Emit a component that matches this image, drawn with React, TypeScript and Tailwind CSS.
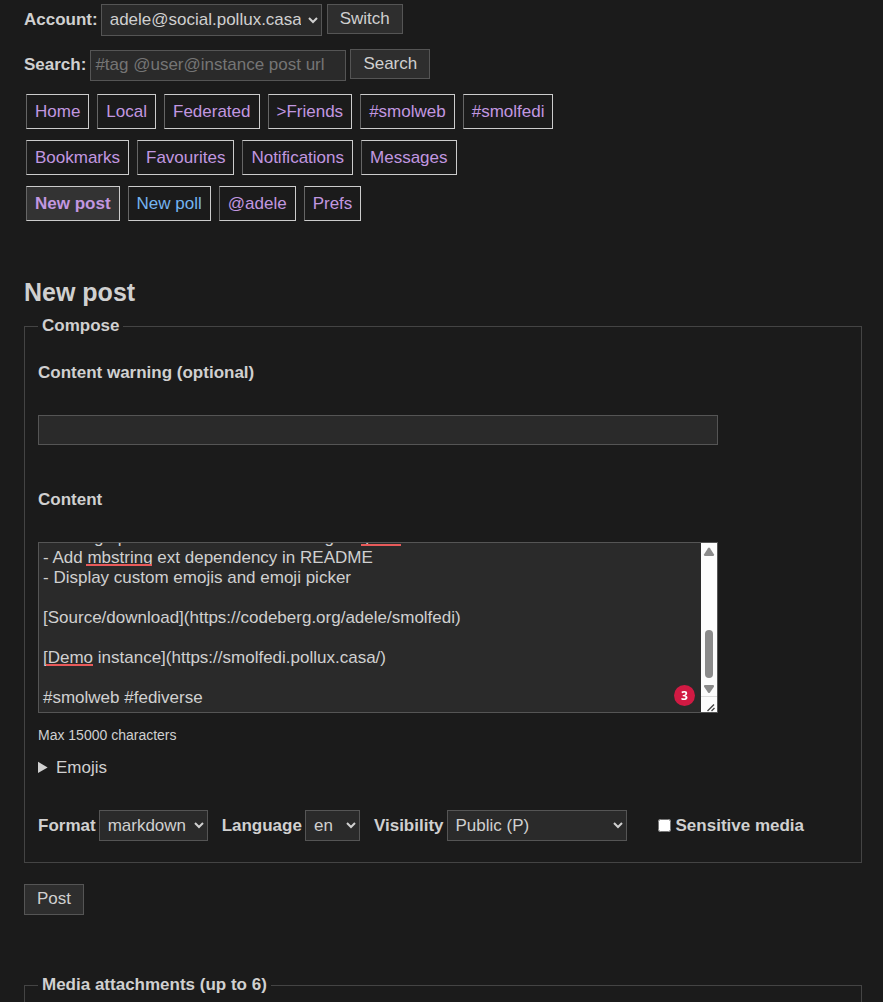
import { useEffect, useRef, useState } from "react";
import clsx from "clsx";

type TNavItem = {
  label: string;
  active?: boolean;
  unvisited?: boolean;
};

const navRows: TNavItem[][] = [
  [
    { label: "Home" },
    { label: "Local" },
    { label: "Federated" },
    { label: ">Friends" },
    { label: "#smolweb" },
    { label: "#smolfedi" },
  ],
  [
    { label: "Bookmarks" },
    { label: "Favourites" },
    { label: "Notifications" },
    { label: "Messages" },
  ],
  [
    { label: "New post", active: true },
    { label: "New poll", unvisited: true },
    { label: "@adele" },
    { label: "Prefs" },
  ],
];

const draft = `- Change post editor content rendering via posix
- Add mbstring ext dependency in README
- Display custom emojis and emoji picker

[Source/download](https://codeberg.org/adele/smolfedi)

[Demo instance](https://smolfedi.pollux.casa/)

#smolweb #fediverse`;

const field = "border border-[#555] bg-[#2a2a2a] text-[#d0d0d0]";
const button = "border border-[#555] bg-[#2e2e2e] px-3 text-[#d0d0d0]";

function NavLink({ item }: { item: TNavItem }) {
  return (
    <a
      href="#"
      className={clsx(
        "border border-[#ccc] border-l-[#666] px-2 py-1 leading-[25px]",
        item.unvisited ? "text-[#74b3f0]" : "text-[#c297e0]",
        item.active && "bg-[#333] font-bold"
      )}
    >
      {item.label}
    </a>
  );
}

function Scrollbar() {
  return (
    <div className="pointer-events-none absolute inset-y-px right-px flex w-4 flex-col items-center bg-[#fcfcfc]">
      <svg width="16" height="16" viewBox="0 0 16 16" fill="#8b8b8b">
        <path d="M7 5.2Q8 4 9 5.2L12.9 11.2Q13.6 13 12 13H4Q2.4 13 3.1 11.2Z" />
      </svg>
      <div className="mt-auto h-12 w-2 rounded-full bg-[#8b8b8b]" />
      <svg width="16" height="18" viewBox="0 0 16 18" fill="#8b8b8b">
        <path d="M3.1 8.8Q2.4 7 4 7H12Q13.6 7 12.9 8.8L9 14.4Q8 15.6 7 14.4Z" />
      </svg>
      <svg
        className="border-t border-[#dcdcdc]"
        width="16"
        height="16"
        viewBox="0 0 16 15"
        stroke="#444"
        strokeWidth="1.4"
      >
        <path d="M6.5 14L13 7.5M10.5 14L13.5 11" />
      </svg>
    </div>
  );
}

function ContentEditor() {
  const [content, setContent] = useState(draft);
  const ref = useRef<HTMLTextAreaElement>(null);

  // keep the end of the draft in view
  useEffect(() => {
    if (ref.current) {
      ref.current.scrollTop = ref.current.scrollHeight;
    }
  }, []);

  return (
    <div className="relative w-[680px] max-w-full">
      <textarea
        ref={ref}
        id="content"
        spellCheck={false}
        value={content}
        onChange={(e) => setContent(e.target.value)}
        className={clsx(
          field,
          "block h-[171px] w-full resize-none p-1 pr-5 leading-5 [scrollbar-width:none]"
        )}
      />
      <span className="pointer-events-none absolute top-0.5 left-[323px] h-0.5 w-10 bg-[#e85a5a]" />
      <span className="pointer-events-none absolute top-[22px] left-12 h-0.5 w-[66px] bg-[#e85a5a]" />
      <span className="pointer-events-none absolute top-[122px] left-2 h-0.5 w-[47px] bg-[#e85a5a]" />
      <span className="pointer-events-none absolute right-[23px] bottom-[7px] flex size-[21px] items-center justify-center rounded-full bg-[#d11a43] font-['Open_Sans',sans-serif] text-xs font-bold text-white">
        3
      </span>
      <Scrollbar />
    </div>
  );
}

export default function App() {
  const [warning, setWarning] = useState("");
  const [sensitive, setSensitive] = useState(false);

  return (
    <div className="flex min-h-screen flex-col bg-[#1b1b1b] pt-1 pr-[21px] pl-6 font-['Liberation_Sans',Arial,sans-serif] text-[17px] leading-6 text-[#d0d0d0]">
      <form className="flex items-start" onSubmit={(e) => e.preventDefault()}>
        <label htmlFor="account" className="mr-[3px] pt-1 font-bold">
          Account:
        </label>
        <select
          id="account"
          className={clsx(field, "h-8 w-[221px] px-1 pb-0.5")}
        >
          <option>adele@social.pollux.casa</option>
        </select>
        <button className={clsx(button, "ml-[5px] h-[30px]")}>Switch</button>
      </form>

      <form
        className="mt-[13px] flex items-start"
        onSubmit={(e) => e.preventDefault()}
      >
        <label htmlFor="search" className="mr-1 pt-1 font-bold">
          Search:
        </label>
        <input
          id="search"
          type="search"
          placeholder="#tag @user@instance post url"
          className={clsx(
            field,
            "mt-px h-[31px] w-64 px-1 pb-0.5 placeholder:text-[#757575]"
          )}
        />
        <button className={clsx(button, "ml-1 h-[30px]")}>Search</button>
      </form>

      <nav className="mt-[13px] ml-0.5 flex flex-col gap-[11px]">
        {navRows.map((row, i) => (
          <div key={i} className="flex flex-wrap gap-2">
            {row.map((item) => (
              <NavLink key={item.label} item={item} />
            ))}
          </div>
        ))}
      </nav>

      <h1 className="mt-[55px] text-[25px] leading-8 font-bold">New post</h1>

      <form onSubmit={(e) => e.preventDefault()}>
        <fieldset className="mt-1.5 border border-[#444] px-[13px] pb-[21px]">
          <legend className="px-1 font-bold">Compose</legend>

          <label htmlFor="warning" className="mt-[23px] block font-bold">
            Content warning (optional)
          </label>
          <input
            id="warning"
            type="text"
            value={warning}
            onChange={(e) => setWarning(e.target.value)}
            className={clsx(
              field,
              "mt-[30px] block h-[30px] w-[680px] max-w-full px-1"
            )}
          />

          <label
            htmlFor="content"
            className="mt-[43px] mb-[30px] block font-bold"
          >
            Content
          </label>
          <ContentEditor />
          <p className="mt-2.5 text-sm leading-6">Max 15000 characters</p>

          <details className="mt-[9px]">
            <summary>Emojis</summary>
          </details>

          <div className="mt-[30px] flex flex-wrap items-center">
            <label htmlFor="format" className="mr-[3px] font-bold">
              Format
            </label>
            <select
              id="format"
              className={clsx(field, "mr-[14px] h-[31px] w-[109px] px-1")}
            >
              <option>markdown</option>
            </select>
            <label htmlFor="language" className="mr-[3px] font-bold">
              Language
            </label>
            <select
              id="language"
              className={clsx(field, "mr-[14px] h-[31px] w-[55px] px-1")}
            >
              <option>en</option>
            </select>
            <label htmlFor="visibility" className="mr-[3px] font-bold">
              Visibility
            </label>
            <select
              id="visibility"
              className={clsx(field, "mr-[31px] h-[31px] w-[180px] px-1")}
            >
              <option>Public (P)</option>
            </select>
            <label className="flex items-center gap-[5px] font-bold">
              <input
                type="checkbox"
                className="size-[13px]"
                checked={sensitive}
                onChange={(e) => setSensitive(e.target.checked)}
              />
              Sensitive media
            </label>
          </div>
        </fieldset>

        <button className={clsx(button, "mt-[21px] h-[31px] pb-0.5")}>
          Post
        </button>
      </form>

      <fieldset className="mt-[58px] flex-1 border border-b-0 border-[#444] px-[13px]">
        <legend className="px-1 font-bold">Media attachments (up to 6)</legend>
      </fieldset>
    </div>
  );
}
